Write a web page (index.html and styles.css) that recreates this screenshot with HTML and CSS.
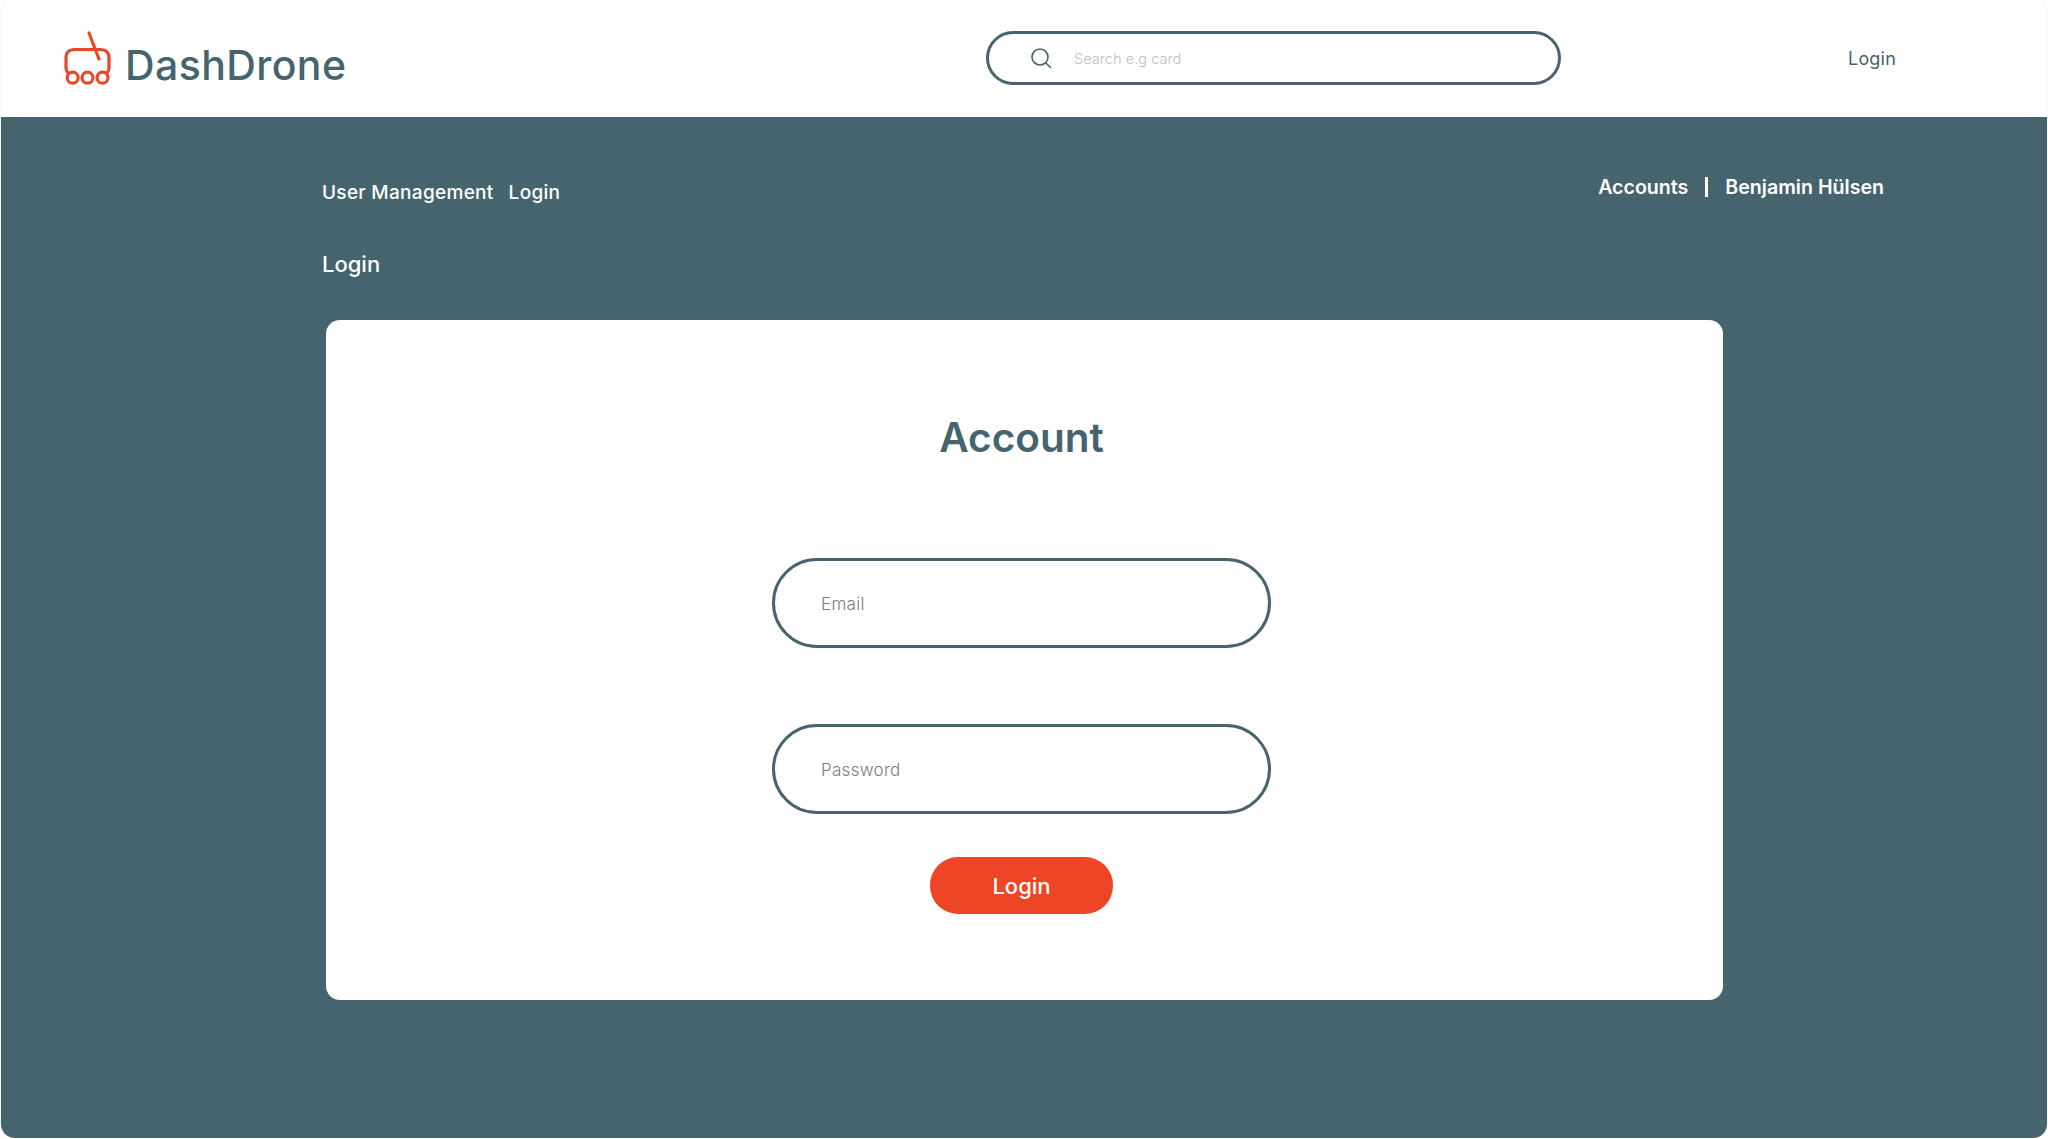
FILE: index.html
```html
<!DOCTYPE html>
<html>
<head>
    <title>DashDrone - Login</title>
    <link rel="stylesheet" href="styles.css">
</head>
<body>
    <div class="frame">
        <header class="topbar">
            <a class="brand" href="#">
                <svg class="brand-icon" viewBox="0 0 50 56" fill="none" stroke="#e8472a" stroke-width="3.2" stroke-linecap="round">
                    <path d="M27 3 L37 29"/>
                    <path d="M6 43 Q4 41 4 38 V28 Q4 19.5 12.5 19.5 H38.5 Q47 19.5 47 28 V38 Q47 41 45 43"/>
                    <circle cx="10.7" cy="47.7" r="5.5"/>
                    <circle cx="25.5" cy="47.7" r="5.5"/>
                    <circle cx="40.5" cy="47.7" r="5.5"/>
                </svg>
                <span class="brand-name">DashDrone</span>
            </a>
            <div class="search">
                <svg class="search-icon" viewBox="0 0 22 22" fill="none" stroke="#45646e" stroke-width="1.6" stroke-linecap="round">
                    <circle cx="10" cy="10" r="8"/>
                    <path d="M16 16 L20.5 20.5"/>
                </svg>
                <input class="search-input" type="text" placeholder="Search e.g card">
            </div>
            <a class="top-login" href="#">Login</a>
        </header>

        <main class="content">
            <div class="subnav">
                <div class="breadcrumb">
                    <a href="#">User Management</a>
                    <a href="#">Login</a>
                </div>
                <div class="account-links">
                    <a href="#">Accounts</a>
                    <span class="divider"></span>
                    <a href="#">Benjamin Hülsen</a>
                </div>
            </div>
            <div class="page-title">Login</div>

            <div class="card">
                <h1>Account</h1>
                <input class="field" type="text" placeholder="Email">
                <input class="field" type="password" placeholder="Password">
                <button class="login-btn">Login</button>
            </div>
        </main>
    </div>
</body>
</html>
```

FILE: styles.css
```css
* {
    box-sizing: border-box;
}
body {
    margin: 0;
    background-color: #fff;
    font-family: Inter, 'Liberation Sans', sans-serif;
}
a {
    color: inherit;
    text-decoration: none;
}
.frame {
    margin: 0 1px;
    height: 1138px;
    border-radius: 14px;
    overflow: hidden;
    display: flex;
    flex-direction: column;
    box-shadow: 0 0 1px #bbb;
}
.topbar {
    height: 117px;
    flex-shrink: 0;
    display: flex;
    align-items: center;
    background: #fff;
    color: #45646e;
    padding-left: 61px;
}
.brand {
    width: 924px;
    display: flex;
    align-items: center;
    gap: 13px;
}
.brand-icon {
    width: 50px;
    height: 56px;
    margin-bottom: 1px;
}
.brand-name {
    margin-top: 13px;
    font-size: 41px;
    font-weight: 500;
    letter-spacing: 0.4px;
}
.search {
    width: 575px;
    height: 54px;
    margin-top: -1px;
    border: 3px solid #45646e;
    border-radius: 27px;
    display: flex;
    align-items: center;
    padding: 0 30px 0 41px;
}
.search-icon {
    width: 22px;
    height: 22px;
    margin-right: 22px;
}
.search-input {
    flex: 1;
    min-width: 0;
    border: none;
    outline: none;
    padding: 2px 0 0;
    background: transparent;
    font-family: Inter, sans-serif;
    font-size: 14.6px;
    font-weight: 300;
}
.search-input::placeholder {
    color: #c0c0c0;
}
.top-login {
    margin-left: 287px;
    font-size: 18px;
    letter-spacing: 0.2px;
}
.content {
    flex: 1;
    background: #45646e;
    color: #fff;
    padding-left: 321px;
}
.subnav {
    display: flex;
    justify-content: space-between;
    padding: 58px 163px 0 0;
}
.breadcrumb {
    display: flex;
    gap: 15px;
    padding-top: 6px;
    font-size: 19px;
    font-weight: 500;
    letter-spacing: 0.3px;
}
.account-links {
    display: flex;
    align-items: center;
    gap: 17px;
    height: 24px;
    font-size: 19.6px;
    font-weight: 600;
}
.divider {
    width: 3px;
    height: 20px;
    background: #fff;
}
.page-title {
    margin-top: 47px;
    font-size: 22px;
    font-weight: 500;
}
.card {
    width: 1397px;
    height: 680px;
    margin: 43px 0 0 4px;
    padding: 92px 6px 0 0;
    border-radius: 14px;
    background: #fff;
    display: flex;
    flex-direction: column;
    align-items: center;
}
.card h1 {
    margin: 0 0 94px;
    font-size: 40.5px;
    line-height: 52px;
    font-weight: 600;
    color: #45646e;
}
.field {
    width: 499px;
    height: 90px;
    margin-bottom: 76px;
    padding: 2px 0 0 46px;
    border: 3px solid #45646e;
    border-radius: 45px;
    outline: none;
    font-family: Inter, sans-serif;
    font-size: 17px;
    font-weight: 300;
    letter-spacing: 0.3px;
}
.field::placeholder {
    color: #7c7c7c;
}
.field + .field {
    margin-bottom: 43px;
}
.login-btn {
    width: 183px;
    height: 57px;
    border: none;
    border-radius: 28px;
    background: #ee4526;
    color: #fff;
    font-family: Inter, sans-serif;
    font-size: 22px;
    font-weight: 500;
    cursor: pointer;
}
```
